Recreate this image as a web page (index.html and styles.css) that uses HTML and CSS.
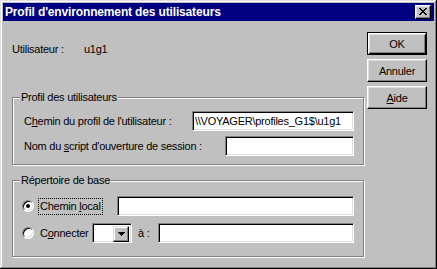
FILE: index.html
```html
<!DOCTYPE html>
<html lang="fr">
<head>
    <meta charset="UTF-8">
    <title>Profil d'environnement des utilisateurs</title>
    <link rel="stylesheet" href="styles.css">
</head>
<body>
    <div class="window">
        <div class="titlebar">
            <span class="title">Profil d'environnement des utilisateurs</span>
            <button class="close" type="button">
                <svg width="8" height="7" viewBox="0 0 8 7" shape-rendering="crispEdges">
                    <path d="M0 0h2v1H0z M6 0h2v1H6z M1 1h2v1H1z M5 1h2v1H5z M2 2h4v1H2z M3 3h2v1H3z M2 4h4v1H2z M1 5h2v1H1z M5 5h2v1H5z M0 6h2v1H0z M6 6h2v1H6z" fill="#000"/>
                </svg>
            </button>
        </div>
        <div class="content">
            <div class="main">
                <div class="user-row">
                    <span class="user-label">Utilisateur :</span>
                    <span>u1g1</span>
                </div>

                <fieldset class="group">
                    <legend>Profil des utilisateurs</legend>
                    <div class="row">
                        <span>C<u>h</u>emin du profil de l'utilisateur :</span>
                        <div class="field path-field">\\VOYAGER\profiles_G1$\u1g1</div>
                    </div>
                    <div class="row">
                        <span>Nom du <u>s</u>cript d'ouverture de session :</span>
                        <div class="field script-field"></div>
                    </div>
                </fieldset>

                <fieldset class="group home">
                    <legend>Répertoire de base</legend>
                    <div class="row">
                        <span class="radio checked"></span>
                        <span class="focus-label">Chemin <u>l</u>ocal</span>
                        <div class="field local-field"></div>
                    </div>
                    <div class="row">
                        <span class="radio"></span>
                        <span class="radio-label">C<u>o</u>nnecter</span>
                        <div class="combo">
                            <span class="combo-btn">
                                <svg width="7" height="4" viewBox="0 0 7 4" shape-rendering="crispEdges">
                                    <path d="M0 0h7v1H0z M1 1h5v1H1z M2 2h3v1H2z M3 3h1v1H3z" fill="#000"/>
                                </svg>
                            </span>
                        </div>
                        <span class="to-label">à :</span>
                        <div class="field share-field"></div>
                    </div>
                </fieldset>
            </div>

            <div class="actions">
                <button class="btn default" type="button">OK</button>
                <button class="btn" type="button">Annuler</button>
                <button class="btn" type="button"><u>A</u>ide</button>
            </div>
        </div>
    </div>
</body>
</html>
```

FILE: styles.css
```css
body {
    margin: 0;
    background: #c0c0c0;
    font-family: "Liberation Sans", Arial, sans-serif;
    font-size: 11px;
    letter-spacing: -0.25px;
    color: #000;
}
u {
    text-decoration-thickness: 1px;
    text-underline-offset: 1px;
}
.window {
    width: 437px;
    height: 269px;
    box-sizing: border-box;
    padding: 3px;
    background: #c0c0c0;
    box-shadow: inset -1px -1px #000, inset 1px 1px #dfdfdf, inset -2px -2px #808080, inset 2px 2px #fff;
}
.titlebar {
    height: 18px;
    background: #000080;
    display: flex;
    align-items: center;
    padding: 0 3px 0 2px;
}
.title {
    flex: 1;
    color: #fff;
    font-weight: bold;
    font-size: 12px;
    letter-spacing: -0.15px;
    line-height: 18px;
}
.close {
    width: 16px;
    height: 14px;
    box-sizing: border-box;
    padding: 0 0 1px;
    background: #c0c0c0;
    border: 1px solid;
    border-color: #fff #000 #000 #fff;
    box-shadow: inset -1px -1px #808080, inset 1px 1px #dfdfdf;
    display: flex;
    align-items: center;
    justify-content: center;
}
.content {
    display: flex;
    gap: 3px;
    padding: 0 7px 0 9px;
}
.main {
    width: 352px;
}
.user-row {
    display: flex;
    margin-top: 22px;
    line-height: 13px;
}
.user-label {
    width: 72px;
}
.group {
    margin: 35px 0 0;
    padding: 0 9px 8px 0;
    min-width: 0;
    border: 1px solid #808080;
    box-shadow: 1px 1px 0 #fff, inset 1px 1px 0 #fff;
}
.group legend {
    margin-left: 7px;
    padding: 0 1px;
    line-height: 13px;
    background: #c0c0c0;
}
.row {
    display: flex;
    align-items: center;
    height: 20px;
    padding-left: 11px;
    margin-top: 7px;
}
.row + .row {
    margin-top: 5px;
}
.field {
    height: 20px;
    box-sizing: border-box;
    margin-left: auto;
    padding: 0 1px;
    background: #fff;
    border: 1px solid;
    border-color: #808080 #fff #fff #808080;
    box-shadow: inset 1px 1px #000, inset -1px -1px #dfdfdf;
    line-height: 18px;
    white-space: nowrap;
    overflow: hidden;
    flex: none;
}
.field:not(:empty) {
    padding-left: 2px;
}
.path-field {
    width: 162px;
}
.script-field {
    width: 129px;
}
.group.home {
    margin-top: 9px;
    padding-bottom: 13px;
}
.home .row {
    padding-left: 9px;
    margin-top: 9px;
}
.home .row + .row {
    margin-top: 7px;
}
.radio {
    width: 12px;
    height: 12px;
    box-sizing: border-box;
    flex: none;
    border-radius: 50%;
    border: 1px solid;
    border-color: #808080 #fff #fff #808080;
    box-shadow: inset 1px 1px #000, inset -1px -1px #dfdfdf;
    background: #fff;
    display: flex;
    align-items: center;
    justify-content: center;
}
.radio.checked::after {
    content: "";
    width: 4px;
    height: 4px;
    border-radius: 50%;
    background: #000;
}
.focus-label {
    margin-left: 4px;
    padding: 1px;
    border: 1px dotted #000;
    line-height: 13px;
}
.local-field {
    width: 237px;
}
.radio-label {
    width: 52px;
    margin-left: 6px;
}
.combo {
    width: 40px;
    height: 20px;
    box-sizing: border-box;
    padding: 2px;
    flex: none;
    background: #fff;
    border: 1px solid;
    border-color: #808080 #fff #fff #808080;
    box-shadow: inset 1px 1px #000, inset -1px -1px #dfdfdf;
    display: flex;
    justify-content: flex-end;
}
.combo-btn {
    width: 16px;
    height: 16px;
    box-sizing: border-box;
    background: #c0c0c0;
    border: 1px solid;
    border-color: #dfdfdf #000 #000 #dfdfdf;
    box-shadow: inset -1px -1px #808080, inset 1px 1px #fff;
    display: flex;
    align-items: center;
    justify-content: center;
}
.to-label {
    margin-left: 6px;
}
.share-field {
    width: 196px;
}
.actions {
    width: 60px;
    display: flex;
    flex-direction: column;
    gap: 4px;
    padding-top: 11px;
}
.btn {
    height: 23px;
    box-sizing: border-box;
    padding: 0;
    font: inherit;
    letter-spacing: inherit;
    color: #000;
    background: #c0c0c0;
    border: 1px solid;
    border-color: #fff #000 #000 #fff;
    box-shadow: inset -1px -1px #808080, inset 1px 1px #dfdfdf;
}
.btn.default {
    border-color: #000;
    box-shadow: inset 1px 1px #fff, inset -1px -1px #000, inset 2px 2px #dfdfdf, inset -2px -2px #808080;
}
```
